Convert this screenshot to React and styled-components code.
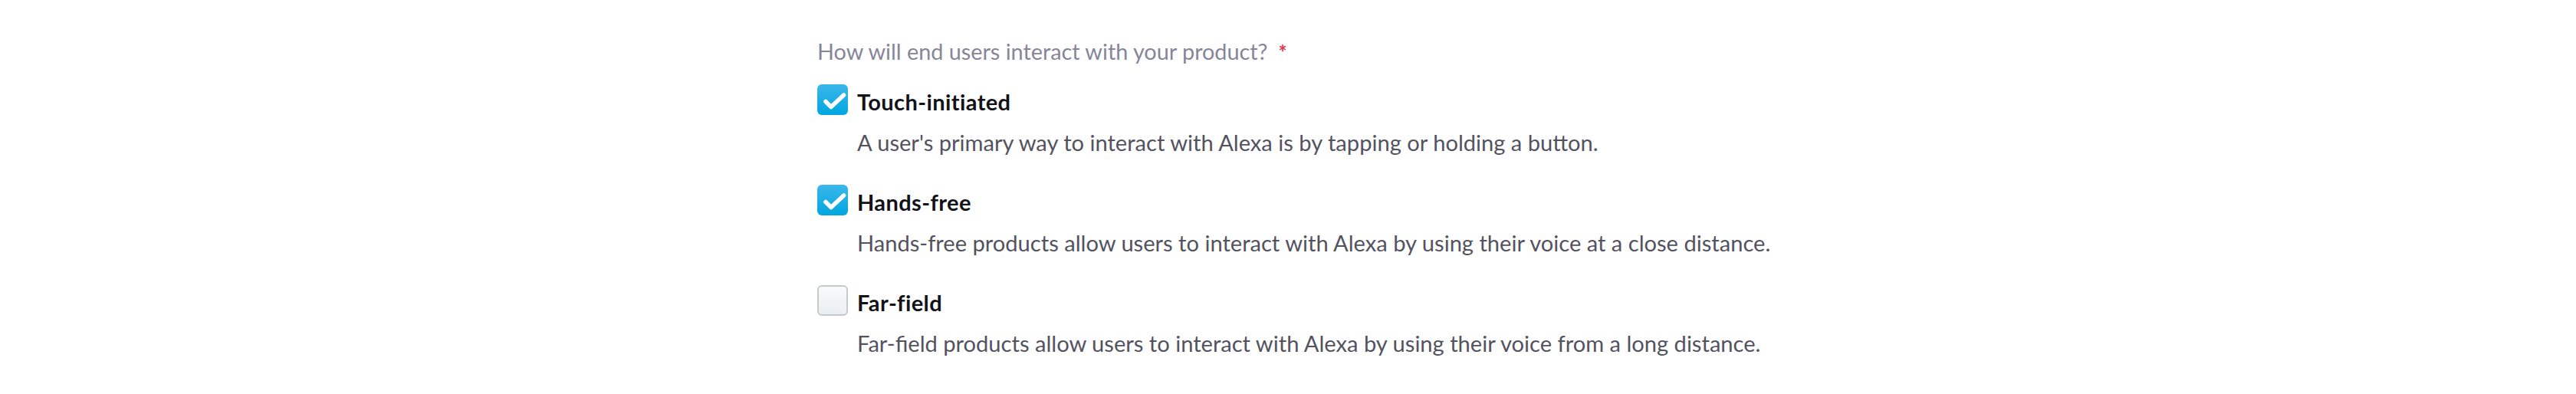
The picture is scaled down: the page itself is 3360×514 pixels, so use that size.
import React from "react";
import styled, { createGlobalStyle } from "styled-components";

const GlobalStyle = createGlobalStyle`
  html, body { margin: 0; padding: 0; background: #ffffff; }
  body { font-family: Lato, "Noto Sans", "Liberation Sans", sans-serif; }
`;

const Page = styled.main`
  padding: 47px 0 0 1066px;
  display: flex;
  flex-direction: column;
  gap: 22px;
`;

const Question = styled.div`
  font-size: 28.8px;
  line-height: 40px;
  color: #85869a;
  display: flex;
  align-items: baseline;
`;

const Required = styled.span`
  color: #e3364a;
  font-weight: 700;
  font-size: 26px;
  margin-left: 14px;
`;

const OptionList = styled.div`
  display: flex;
  flex-direction: column;
  gap: 35px;
`;

const Option = styled.label`
  display: grid;
  grid-template-columns: 40px max-content;
  column-gap: 12px;
  row-gap: 10px;
  cursor: pointer;
`;

const Box = styled.span`
  grid-row: 1;
  grid-column: 1;
  width: 40px;
  height: 40px;
  box-sizing: border-box;
  border-radius: 6px;
  display: flex;
  align-items: center;
  justify-content: center;
  background: ${(p) =>
    p.$checked
      ? "linear-gradient(180deg, #3bb7ea 0%, #00a6e0 100%)"
      : "linear-gradient(180deg, #f8fafb 0%, #ebeff2 100%)"};
  border: ${(p) => (p.$checked ? "none" : "2px solid #c3cacd")};
`;

const Title = styled.span`
  grid-row: 1;
  grid-column: 2;
  font-size: 29px;
  line-height: 46px;
  letter-spacing: 0.4px;
  font-weight: 700;
  color: #121219;
`;

const Description = styled.span`
  grid-row: 2;
  grid-column: 2;
  font-size: 29.1px;
  line-height: 40px;
  color: #53535f;
`;

const Check = () => (
  <svg width="40" height="40" viewBox="0 0 40 40" aria-hidden="true">
    <polyline
      points="11,22.5 18,29.5 34.5,14"
      fill="none"
      stroke="#ffffff"
      strokeWidth="5.5"
      strokeLinecap="round"
      strokeLinejoin="round"
    />
  </svg>
);

const options = [
  {
    title: "Touch-initiated",
    desc: "A user's primary way to interact with Alexa is by tapping or holding a button.",
    checked: true,
  },
  {
    title: "Hands-free",
    desc: "Hands-free products allow users to interact with Alexa by using their voice at a close distance.",
    checked: true,
  },
  {
    title: "Far-field",
    desc: "Far-field products allow users to interact with Alexa by using their voice from a long distance.",
    checked: false,
  },
];

export default function App() {
  return (
    <>
      <GlobalStyle />
      <Page>
        <Question>
          How will end users interact with your product?
          <Required>*</Required>
        </Question>
        <OptionList>
          {options.map((o) => (
            <Option key={o.title}>
              <Box $checked={o.checked}>{o.checked && <Check />}</Box>
              <Title>{o.title}</Title>
              <Description>{o.desc}</Description>
            </Option>
          ))}
        </OptionList>
      </Page>
    </>
  );
}
